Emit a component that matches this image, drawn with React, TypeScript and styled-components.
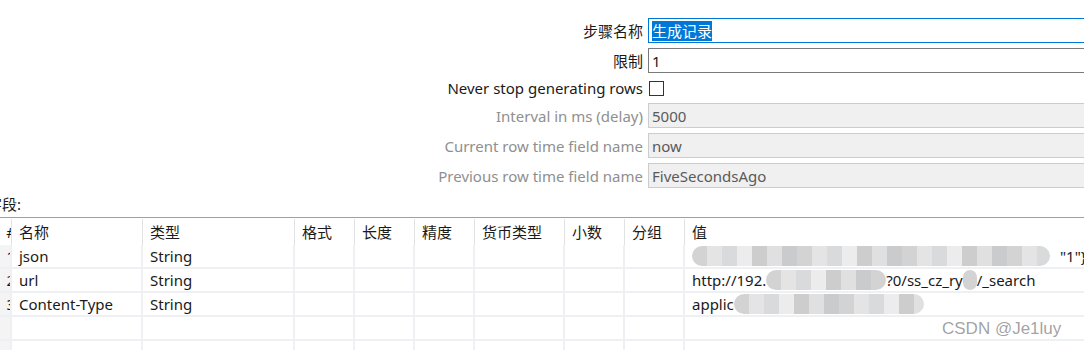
import styled, { createGlobalStyle } from "styled-components";

const GlobalStyle = createGlobalStyle`
  body {
    margin: 0;
    background: #ffffff;
    font-family: "Noto Sans", "Noto Sans CJK SC", sans-serif;
    font-size: 15px;
    color: #1a1a1a;
  }
`;

const Page = styled.div`
  position: relative;
  width: 1084px;
  height: 350px;
  overflow: hidden;
  padding-top: 18px;
  box-sizing: border-box;
`;

const Settings = styled.div`
  display: grid;
  grid-template-columns: 643px 470px;
  column-gap: 5px;
  row-gap: 5px;
  align-items: center;
`;

const Label = styled.label<{ $muted?: boolean }>`
  text-align: right;
  white-space: nowrap;
  color: ${(p) => (p.$muted ? "#8f8f8f" : "#1a1a1a")};
  line-height: 20px;
`;

const Field = styled.div<{ $state?: "focus" | "normal" | "disabled" }>`
  height: 25px;
  box-sizing: border-box;
  border: 1px solid
    ${(p) =>
      p.$state === "focus" ? "#0078d7" : p.$state === "disabled" ? "#cccccc" : "#7a7a7a"};
  background: ${(p) => (p.$state === "disabled" ? "#f0f0f0" : "#ffffff")};
  color: ${(p) => (p.$state === "disabled" ? "#5a5a5a" : "#1a1a1a")};
  padding: 0 3px;
  display: flex;
  align-items: center;
  line-height: 20px;
`;

const Selected = styled.span`
  background: #0078d7;
  color: #ffffff;
`;

const CheckRow = styled.div`
  height: 20px;
  display: flex;
  align-items: center;
`;

const CheckBox = styled.span`
  width: 13px;
  height: 13px;
  border: 1px solid #333333;
  background: #ffffff;
  margin-left: 1px;
`;

const SectionTitle = styled.div`
  margin-top: 4px;
  margin-left: -13px;
  height: 25px;
  line-height: 25px;
`;

const Table = styled.div`
  border-top: 1px solid #a0a0a0;
`;

const Row = styled.div<{ $head?: boolean }>`
  display: grid;
  grid-template-columns: 12px 131px 152px 60px 60px 60px 90px 60px 60px 420px;
  height: ${(p) => (p.$head ? "27px" : "24px")};
  border-bottom: ${(p) => (p.$head ? "none" : "2px solid #eef0f3")};
  box-sizing: border-box;
`;

const Cell = styled.div<{ $head?: boolean; $index?: boolean }>`
  position: relative;
  box-sizing: border-box;
  padding-left: ${(p) => (p.$index ? "0" : "7px")};
  white-space: nowrap;
  overflow: hidden;
  display: flex;
  align-items: center;
  justify-content: ${(p) => (p.$index ? "flex-end" : "flex-start")};
  line-height: 20px;
  margin-top: ${(p) => (p.$head ? "1px" : "0")};
  border-right: ${(p) => (p.$head ? "1px solid #e2e2e2" : "2px solid #eef0f3")};
  background: ${(p) => (p.$index && !p.$head ? "#f4f4f4" : "transparent")};
`;

const IndexText = styled.span`
  margin-right: -5px;
`;

const Mosaic = styled.span<{ $w: number }>`
  display: inline-block;
  width: ${(p) => p.$w}px;
  height: 20px;
  border-radius: 10px;
  vertical-align: middle;
  background: repeating-linear-gradient(
    90deg,
    #d3d3d3 0 15px,
    #e4e4e4 15px 30px,
    #d8dadc 30px 45px,
    #ececec 45px 60px,
    #cdcdcd 60px 75px,
    #e0e0e0 75px 90px,
    #c9cbcc 90px 105px
  );
`;

const Watermark = styled.div`
  position: absolute;
  left: 942px;
  top: 319px;
  font-family: "Liberation Sans", Arial, sans-serif;
  font-size: 17px;
  color: rgba(110, 110, 110, 0.65);
`;

const headers = ["#", "名称", "类型", "格式", "长度", "精度", "货币类型", "小数", "分组", "值"];

const fields = [
  { n: "1", name: "json", type: "String" },
  { n: "2", name: "url", type: "String" },
  { n: "3", name: "Content-Type", type: "String" },
  { n: "", name: "", type: "" },
  { n: "", name: "", type: "" },
];

const renderValue = (i: number) => {
  if (i === 0)
    return (
      <>
        <Mosaic $w={358} />
        <span style={{ marginLeft: 10 }}>"1"{"}"}</span>
      </>
    );
  if (i === 1)
    return (
      <>
        http://192.
        <Mosaic $w={120} />
        ?0/ss_cz_ry
        <Mosaic $w={14} />
        /_search
      </>
    );
  if (i === 2)
    return (
      <>
        applic
        <Mosaic $w={190} />
      </>
    );
  return null;
};

export default function App() {
  return (
    <>
      <GlobalStyle />
      <Page>
        <Settings>
          <Label>步骤名称</Label>
          <Field $state="focus">
            <Selected>生成记录</Selected>
          </Field>
          <Label>限制</Label>
          <Field>1</Field>
          <Label>Never stop generating rows</Label>
          <CheckRow>
            <CheckBox />
          </CheckRow>
          <Label $muted>Interval in ms (delay)</Label>
          <Field $state="disabled">5000</Field>
          <Label $muted>Current row time field name</Label>
          <Field $state="disabled">now</Field>
          <Label $muted>Previous row time field name</Label>
          <Field $state="disabled">FiveSecondsAgo</Field>
        </Settings>
        <SectionTitle>字段:</SectionTitle>
        <Table>
          <Row $head>
            {headers.map((h, i) => (
              <Cell key={h} $head $index={i === 0}>
                {i === 0 ? <IndexText>{h}</IndexText> : h}
              </Cell>
            ))}
          </Row>
          {fields.map((f, i) => (
            <Row key={i}>
              <Cell $index>
                <IndexText>{f.n}</IndexText>
              </Cell>
              <Cell>{f.name}</Cell>
              <Cell>{f.type}</Cell>
              <Cell />
              <Cell />
              <Cell />
              <Cell />
              <Cell />
              <Cell />
              <Cell>{renderValue(i)}</Cell>
            </Row>
          ))}
        </Table>
        <Watermark>CSDN @Je1luy</Watermark>
      </Page>
    </>
  );
}
